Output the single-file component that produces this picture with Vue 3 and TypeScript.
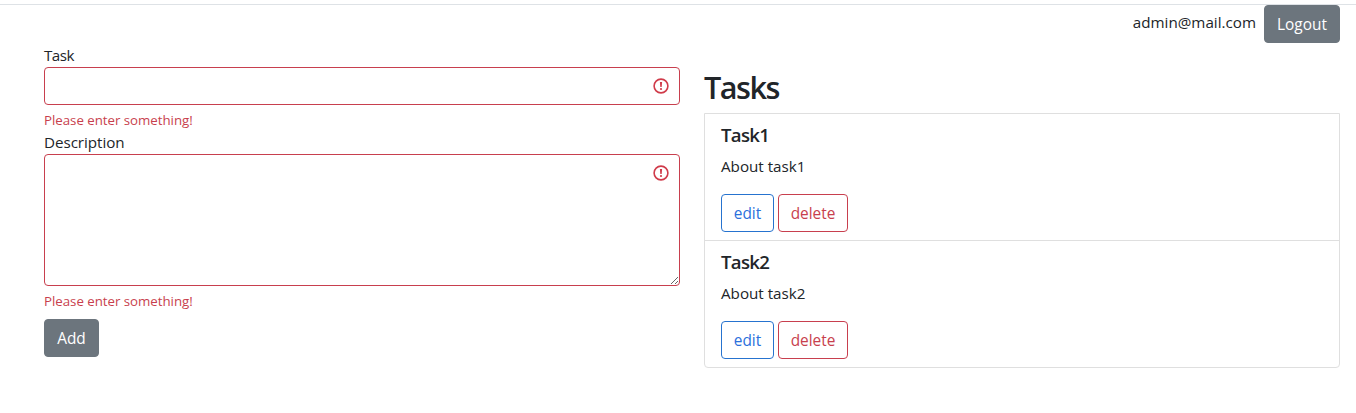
<script setup lang="ts">
import { ref } from 'vue'

interface Field {
  id: string
  label: string
  multiline: boolean
}

interface Task {
  name: string
  about: string
}

const fields: Field[] = [
  { id: 'task', label: 'Task', multiline: false },
  { id: 'description', label: 'Description', multiline: true },
]

const tasks = ref<Task[]>([
  { name: 'Task1', about: 'About task1' },
  { name: 'Task2', about: 'About task2' },
])
</script>

<template>
  <div class="page">
    <header class="topbar">
      <span class="email">admin@mail.com</span>
      <button class="btn solid logout" type="button">Logout</button>
    </header>
    <main class="columns">
      <form class="form" @submit.prevent>
        <div v-for="f in fields" :key="f.id" class="field">
          <label :for="f.id" :class="'label-' + f.id">{{ f.label }}</label>
          <div class="control">
            <textarea v-if="f.multiline" :id="f.id"></textarea>
            <input v-else :id="f.id" type="text" />
            <svg class="alert" viewBox="0 0 16 16" width="16" height="16" aria-hidden="true">
              <circle cx="8" cy="8" r="6.9" fill="none" stroke="#d03b4a" stroke-width="1.6" />
              <path d="M6.9 4h2.2l-.4 5H7.3z" fill="#d03b4a" />
              <circle cx="8" cy="11" r="1.1" fill="#d03b4a" />
            </svg>
          </div>
          <div class="feedback">Please enter something!</div>
        </div>
        <button class="btn solid add" type="submit">Add</button>
      </form>
      <section class="tasks">
        <h2>Tasks</h2>
        <ul>
          <li v-for="t in tasks" :key="t.name">
            <h5>{{ t.name }}</h5>
            <p>{{ t.about }}</p>
            <div class="actions">
              <button class="btn edit" type="button">edit</button>
              <button class="btn delete" type="button">delete</button>
            </div>
          </li>
        </ul>
      </section>
    </main>
  </div>
</template>

<style>
body {
  background: #fff;
}
</style>

<style scoped>
.page,
.page * {
  box-sizing: border-box;
}
.page {
  height: 413px;
  padding-top: 4px;
  overflow: hidden;
  font-family: 'Open Sans', 'Noto Sans', sans-serif;
  font-size: 15.2px;
  line-height: 24px;
  color: #212529;
}
.topbar {
  display: flex;
  justify-content: flex-end;
  height: 39px;
  padding-right: 16px;
  border-top: 1px solid #dee2e6;
}
.email {
  margin: 5px 8px 0 0;
}
.btn {
  display: inline-flex;
  align-items: center;
  justify-content: center;
  height: 38px;
  padding: 1px 0 0;
  font: inherit;
  font-size: 15.4px;
  white-space: nowrap;
  background: transparent;
  border: 1px solid;
  border-radius: 4px;
}
.solid {
  color: #fff;
  background: #6c757d;
  border-color: #6c757d;
}
.logout {
  width: 76px;
}
.add {
  width: 55px;
  margin-top: 8px;
}
.columns {
  display: grid;
  grid-template-columns: 636px 636px;
  column-gap: 24px;
  padding-left: 44px;
}
.form {
  padding-top: 1px;
}
.field label {
  display: block;
  height: 23px;
  line-height: 23px;
}
.field .label-task {
  letter-spacing: -0.5px;
}
.field .label-description {
  height: 24px;
  line-height: 25px;
  letter-spacing: -0.05px;
}
.control {
  position: relative;
}
input,
textarea {
  display: block;
  width: 100%;
  height: 38px;
  margin: 0;
  padding: 6px 36px 6px 12px;
  font: inherit;
  color: inherit;
  background: #fff;
  border: 1px solid #c83f4e;
  border-radius: 4px;
  outline: none;
}
textarea {
  height: 132px;
  resize: vertical;
}
.alert {
  position: absolute;
  top: 11px;
  right: 11px;
}
.feedback {
  height: 21px;
  margin-top: 4px;
  font-size: 13.3px;
  line-height: 23px;
  letter-spacing: -0.03px;
  color: #c83f4e;
}
.tasks {
  padding-top: 24px;
}
h2 {
  height: 38px;
  margin: 0 0 8px;
  font-size: 30.6px;
  font-weight: 600;
  line-height: 40px;
  letter-spacing: -1.5px;
}
ul {
  margin: 0;
  padding: 0;
  list-style: none;
  border: 1px solid #dfdfdf;
  border-radius: 0 0 4px 4px;
}
li {
  padding: 8px 16px;
}
li + li {
  border-top: 1px solid #dfdfdf;
}
h5 {
  height: 24px;
  margin: 0 0 8px;
  font-size: 18.6px;
  font-weight: 600;
  line-height: 26px;
  letter-spacing: -0.7px;
}
p {
  margin: 0 0 16px;
}
.actions {
  display: flex;
  gap: 4px;
}
.edit {
  width: 53px;
  color: #2b70dc;
  border-color: #2673cf;
}
.delete {
  width: 70px;
  color: #c83f4e;
  border-color: #c83f4e;
}
</style>
